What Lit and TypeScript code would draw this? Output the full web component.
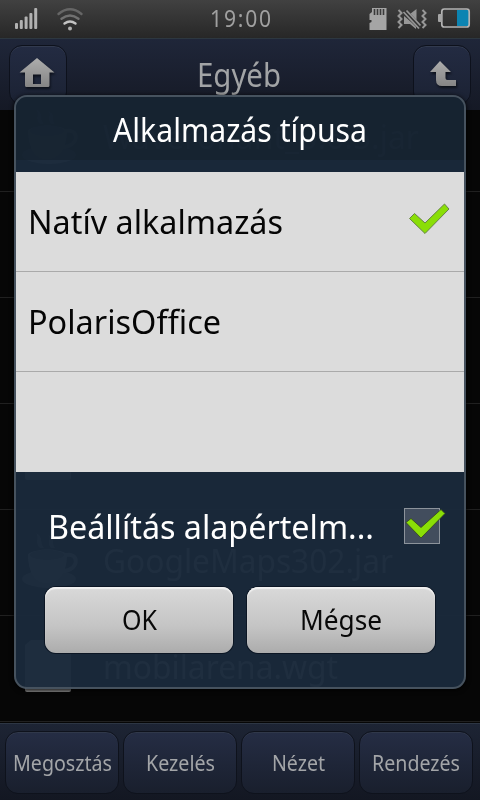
import { LitElement, html, css, svg } from 'lit';
import { customElement, property } from 'lit/decorators.js';

// One line of text squeezed or stretched to a given width.
@customElement('fit-text')
export class FitText extends LitElement {
  @property({ type: Number }) width = 0;
  @property() text = '';

  static styles = css`
    :host {
      display: block;
      flex: none;
      white-space: pre;
      line-height: 1;
    }
    .line {
      display: inline-block;
      transform-origin: 0 50%;
    }
  `;

  firstUpdated() {
    const line = this.renderRoot.querySelector('.line') as HTMLElement;
    this.style.width = `${this.width}px`;
    line.style.transform = `scaleX(${this.width / line.getBoundingClientRect().width})`;
  }

  render() {
    return html`<span class="line">${this.text}</span>`;
  }
}

const metal = (id: string) => svg`
  <linearGradient id=${id} x1="0" y1="0" x2="0" y2="1">
    <stop offset="0" stop-color="#adadad" />
    <stop offset="1" stop-color="#858585" />
  </linearGradient>`;

@customElement('app-root')
export class AppRoot extends LitElement {
  static properties = {
    files: { attribute: false },
    options: { attribute: false },
    actions: { attribute: false },
  };

  declare files: any[];
  declare options: any[];
  declare actions: any[];

  static styles = css`
    :host {
      display: block;
      position: relative;
      width: 480px;
      height: 800px;
      overflow: hidden;
      background: #060606;
      font-family: 'Noto Sans', 'Open Sans', sans-serif;
    }
    svg {
      display: block;
      flex: none;
    }
    .screen {
      display: flex;
      flex-direction: column;
      height: 800px;
    }
    .status {
      display: grid;
      grid-template-columns: 1fr auto 1fr;
      align-items: center;
      height: 38px;
      background: linear-gradient(#414141, #272727);
      color: #a0a0a0;
      font-size: 23px;
    }
    .clock {
      padding: 0 0 2px 2px;
      letter-spacing: 2px;
    }
    .status-right {
      justify-self: end;
    }
    .header {
      display: flex;
      justify-content: space-between;
      box-sizing: border-box;
      height: 72px;
      padding: 6px 9px 0;
      border-top: 1px solid #2d3740;
      background: linear-gradient(#1f2639, #151925);
      color: #a2a4a6;
      font-size: 33px;
    }
    .header fit-text {
      margin: 13px 2px 0 0;
    }
    .tool {
      display: flex;
      justify-content: center;
      box-sizing: border-box;
      width: 58px;
      height: 60px;
      padding-top: 11px;
      border: 1px solid #0d111c;
      border-radius: 13px;
      background: linear-gradient(#232b42, #1b2233);
      box-shadow: inset 0 1px #323a4e;
    }
    .tool svg {
      filter: drop-shadow(1px 2px 1px #0c1019);
    }
    .home {
      padding-right: 2px;
    }
    .up {
      padding-left: 1px;
    }
    .files {
      flex: 1;
      overflow: hidden;
    }
    .file {
      display: flex;
      align-items: center;
      box-sizing: border-box;
      height: 106px;
      padding: 0 0 5px 20px;
      gap: 23px;
      border-bottom: 1px solid #202020;
      color: #a0a0a0;
      font-size: 33px;
    }
    .file:first-child {
      margin-top: -24px;
    }
    .footer {
      display: flex;
      gap: 4px;
      box-sizing: border-box;
      height: 77px;
      padding: 7px 5px 0;
      border-top: 1px solid #2d3644;
      background: linear-gradient(#1d2434, #131722);
    }
    .action {
      display: flex;
      justify-content: center;
      align-items: center;
      box-sizing: border-box;
      width: 114px;
      height: 63px;
      border: 1px solid #0e121c;
      border-radius: 13px;
      background: linear-gradient(#252d44, #191f2d);
      box-shadow: inset 0 1px #30384a;
      color: #a3a5a8;
      font-size: 21.5px;
    }
    .dialog {
      position: absolute;
      left: 14px;
      top: 95px;
      display: flex;
      flex-direction: column;
      box-sizing: border-box;
      width: 452px;
      height: 594px;
      border: 2px solid #46525e;
      border-radius: 13px;
      background: rgba(26, 41, 59, 0.965);
      box-shadow: 0 1px 5px #000;
      overflow: hidden;
      color: #fff;
      font-size: 33px;
    }
    .title {
      display: flex;
      justify-content: center;
      box-sizing: border-box;
      height: 63px;
      margin-bottom: 12px;
      padding-top: 16px;
      background: rgba(20, 32, 43, 0.6);
    }
    .options {
      height: 300px;
      background: #dcdcdc;
      color: #050505;
    }
    .option {
      display: flex;
      align-items: center;
      justify-content: space-between;
      box-sizing: border-box;
      height: 100px;
      padding: 0 14px 0 12px;
      border-bottom: 1px solid #aaa;
    }
    .option svg {
      padding-bottom: 4px;
    }
    .default {
      display: flex;
      align-items: center;
      height: 108px;
      padding-left: 32px;
      gap: 28px;
    }
    .buttons {
      display: flex;
      gap: 14px;
      padding: 7px 0 0 29px;
    }
    .button {
      display: flex;
      justify-content: center;
      align-items: center;
      width: 188px;
      height: 66px;
      border-radius: 11px;
      background: linear-gradient(#d9d9d9, #c4c4c4 60%, #acacac);
      box-shadow: inset 0 2px 1px #f0f0f0, 0 0 0 1px #0c1624;
      color: #080808;
      font-size: 27.5px;
    }
  `;

  constructor() {
    super();
    this.files = [
      { name: 'Waveronant_0.6.5.jar', width: 316, icon: 'cup' },
      { name: '', width: 0, icon: 'none' },
      { name: '', width: 0, icon: 'none' },
      { name: '', width: 0, icon: 'page' },
      { name: 'GoogleMaps302.jar', width: 290, icon: 'cup' },
      { name: 'mobilarena.wgt', width: 235, icon: 'page' },
    ];
    this.options = [
      { name: 'Natív alkalmazás', width: 255, selected: true },
      { name: 'PolarisOffice', width: 193, selected: false },
    ];
    this.actions = [
      { name: 'Megosztás', width: 99 },
      { name: 'Kezelés', width: 69 },
      { name: 'Nézet', width: 53 },
      { name: 'Rendezés', width: 88 },
    ];
  }

  renderFileIcon(icon: string) {
    if (icon === 'cup') {
      return html`<svg width="60" height="58" viewBox="0 -2 60 58" fill="#777">
        <ellipse cx="29" cy="46" rx="27" ry="9" />
        <path d="M8 21c0 20 8 29 19 29s20-9 20-29c-8-6-31-6-39 0z" fill="#999" />
        <ellipse cx="27" cy="22" rx="17" ry="5" fill="#555" />
        <path d="M46 22c13-3 14 15-3 16" fill="none" stroke="#888" stroke-width="4" />
        <path d="M20 15c-6-6 0-9-4-15 8 4 3 9 8 15zM31 15c-5-6 1-9-3-13 8 3 3 8 7 13z" fill="#666" />
      </svg>`;
    }
    if (icon === 'page') {
      return html`<svg width="60" height="58" viewBox="0 0 60 58">
        <path d="M5 8l6-5h35l5 5v45q0 2-2 2H7q-2 0-2-2z" fill="#8b8b8b" />
      </svg>`;
    }
    return '';
  }

  renderCheck() {
    return html`<svg width="44" height="34" viewBox="0 0 44 34">
      <path d="M3.5 15.500L8.500 10.500L19 20L38.500 1L43 6L19 30.5Z" fill="#8ade07" stroke="#668445" stroke-width="1" stroke-linejoin="round" />
    </svg>`;
  }

  render() {
    return html`
      <div class="screen">
        <div class="status">
          <svg width="100" height="38" viewBox="0 0 100 38">
            <g fill="#b2b2b2">
              <rect x="15" y="23" width="3" height="6" rx="1" />
              <rect x="19.8" y="20" width="3" height="9" rx="1" />
              <rect x="24.6" y="16.5" width="3" height="12.5" rx="1" />
              <rect x="29.4" y="13" width="3" height="16" rx="1" />
              <rect x="34.2" y="8" width="3" height="21" rx="1" />
              <circle cx="70" cy="28.5" r="2" />
            </g>
            <g fill="none" stroke-width="2.4" stroke-linecap="round">
              <path d="M64.5 23.5q5.5-4 11 0" stroke="#c4c4c4" />
              <path d="M61.5 18.8q8.500-6.500 17 0" stroke="#717171" />
              <path d="M58.5 14q11.500-9.500 23 0" stroke="#666" />
            </g>
          </svg>
          <fit-text class="clock" .text=${'19:00'} width="63"></fit-text>
          <svg class="status-right" width="120" height="38" viewBox="0 0 120 38">
            <path d="M12 8h14.500v22H9.500v-7l2-1v-2h-2v-6l2.500-2z" fill="#a5a5a5" />
            <path d="M14.500 9v6M17.500 9v6M20.500 9v6M23.500 9v6" stroke="#3a3a3a" stroke-width="1.6" />
            <g fill="none" stroke="#969696" stroke-width="2">
              <path d="M38.5 10l3 3-3 3 3 3-3 3 3 3-3 3" />
              <path d="M62.5 10l3 3-3 3 3 3-3 3 3 3-3 3" />
            </g>
            <path d="M44 16v8h6l6 5v-3zM50 14l6.500-5v12z" fill="#969696" />
            <path d="M44.500 11l16 17" stroke="#333" stroke-width="5" />
            <path d="M43.500 12l15.500 16.500M46.500 10.500l14 15" stroke="#969696" stroke-width="1.8" />
            <rect x="97" y="10" width="12" height="16" fill="#0c84b2" />
            <rect x="81.8" y="9" width="27.4" height="18" rx="2.5" fill="none" stroke="#b4b4b4" stroke-width="1.7" />
            <rect x="78" y="14" width="4" height="8" rx="1" fill="#a5a5a5" />
          </svg>
        </div>

        <div class="header">
          <div class="tool home">
            <svg width="36" height="32" viewBox="0 0 36 32">
              ${metal('home')}
              <path fill-rule="evenodd" d="M18 1L35.500 15.500h-5V28.500q0 1.500-1.500 1.500H7.500q-1.500 0-1.500-1.500V15.500H.5zM14 17.500v9.500h8v-9.500z" fill="url(#home)" />
            </svg>
          </div>
          <fit-text .text=${'Egyéb'} width="84"></fit-text>
          <div class="tool up">
            <svg width="36" height="32" viewBox="0 0 36 32">
              ${metal('up')}
              <path d="M15 4L26 15h-5.500V21q0 2 2 2H31v6H17q-6 0-6-6v-8H5z" fill="url(#up)" />
            </svg>
          </div>
        </div>

        <div class="files">
          ${this.files.map(f => html`
            <div class="file">
              ${this.renderFileIcon(f.icon)}
              ${f.name ? html`<fit-text .text=${f.name} .width=${f.width}></fit-text>` : ''}
            </div>
          `)}
        </div>

        <div class="footer">
          ${this.actions.map(a => html`
            <div class="action"><fit-text .text=${a.name} .width=${a.width}></fit-text></div>
          `)}
        </div>
      </div>

      <div class="dialog">
        <div class="title"><fit-text .text=${'Alkalmazás típusa'} width="254"></fit-text></div>
        <div class="options">
          ${this.options.map(o => html`
            <div class="option">
              <fit-text .text=${o.name} .width=${o.width}></fit-text>
              ${o.selected ? this.renderCheck() : ''}
            </div>
          `)}
        </div>
        <div class="default">
          <fit-text .text=${'Beállítás alapértelm...'} width="326"></fit-text>
          <svg width="44" height="40" viewBox="0 0 44 40">
            <rect x="2.5" y="2.5" width="35" height="35" fill="#424d5d" stroke="#8c939b" />
            <path d="M4 16.500L9 12.500L19 21.500L39 3.500L43 7.500L19 32Z" fill="#8ade07" stroke="#33431f" stroke-width=".8" />
          </svg>
        </div>
        <div class="buttons">
          <div class="button"><fit-text .text=${'OK'} width="35"></fit-text></div>
          <div class="button"><fit-text .text=${'Mégse'} width="82"></fit-text></div>
        </div>
      </div>
    `;
  }
}
